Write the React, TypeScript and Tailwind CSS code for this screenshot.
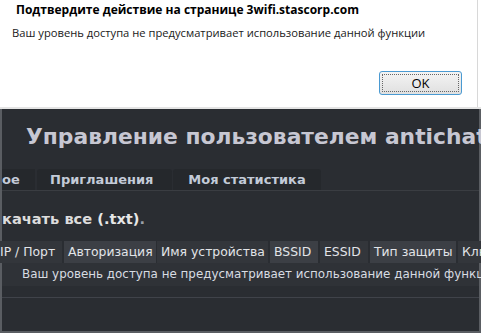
export default function App() {
  const headers = [
    { t: "IP / Порт", w: "w-[62px]", bg: "bg-[#33363b]", gap: "-ml-[2px] pl-0" },
    { t: "Авторизация", w: "w-[92px]", bg: "bg-[#3c3f45]", gap: "ml-[2px] pl-[4px]" },
    { t: "Имя устройства", w: "w-[111px]", bg: "bg-[#33363b]", gap: "ml-[1px] pl-[4px]" },
    { t: "BSSID", w: "w-[48px]", bg: "bg-[#3c3f45]", gap: "ml-[2px] pl-[4px]" },
    { t: "ESSID", w: "w-[48px]", bg: "bg-[#33363b]", gap: "ml-[2px] pl-[4px]" },
    { t: "Тип защиты", w: "w-[86px]", bg: "bg-[#3c3f45]", gap: "ml-[2px] pl-[4px]" },
    { t: "Ключ", w: "w-[60px]", bg: "bg-[#33363b]", gap: "ml-[2px] pl-[4px]" },
  ];

  return (
    <div className="w-[481px] h-[333px] overflow-hidden flex flex-col bg-[#2a2d32]">
      {/* диалог подтверждения */}
      <div className="h-[109px] shrink-0 bg-white border-b-2 border-[#e4e4e4] flex">
        <div className="flex-1 flex flex-col border-r border-[#d8d8d8] font-['Open_Sans',sans-serif]">
          <div className="pl-[16px] pt-[1px] text-[12px] font-bold text-black leading-[18px] whitespace-nowrap">
            Подтвердите действие на странице 3wifi.stascorp.com
          </div>
          <div className="pl-[12px] pt-[6px] text-[11.2px] text-[#1a1a1a] leading-[16px] whitespace-nowrap">
            Ваш уровень доступа не предусматривает использование данной функции
          </div>
          <div className="flex justify-end pr-[15px] pt-[30px]">
            <button className="w-[83px] h-[24px] rounded-[3px] border border-[#4a9ad2] bg-gradient-to-b from-[#f4f4f4] to-[#e0e0e0] p-[2px]">
              <div className="w-full h-full border border-dotted border-[#666] flex items-center justify-center text-[13px] text-black leading-none">
                OK
              </div>
            </button>
          </div>
        </div>
        <div className="w-[3px] bg-white" />
      </div>

      {/* страница */}
      <div className="flex-1 flex flex-col border-l-2 border-r-2 border-b-2 border-[#5a5d62] font-['DejaVu_Sans',sans-serif]">
        <div className="pl-[24px] pt-[14px] h-[60px] text-[21.8px] font-bold text-[#c7c7d2] whitespace-nowrap leading-[28px]">
          Управление пользователем antichat
        </div>
        <div className="flex h-[22px] border-b border-[#3a3d42] text-[13px] font-bold text-[#c3cbd8] whitespace-nowrap">
          <div className="w-[33px] bg-[#25282c] flex items-center">ое</div>
          <div className="w-[2px]" />
          <div className="w-[135px] bg-[#25282c] flex items-center pl-[13px] rounded-t-[3px]">Приглашения</div>
          <div className="w-[1px]" />
          <div className="w-[148px] bg-[#25282c] flex items-center justify-center rounded-t-[3px]">Моя статистика</div>
        </div>
        <div className="h-[50px] pt-[18px] text-[14.6px] font-bold text-[#dcdcdc] whitespace-nowrap leading-[20px]">
          качать все <span className="text-[#e6e6e6]">(.txt)</span><span className="text-[#9aa0a8]">.</span>
        </div>
        <div className="flex h-[22px] whitespace-nowrap text-[12.4px] text-[#e2e4e8]">
          {headers.map((h, i) => (
            <div key={i} className={`${h.w} ${h.bg} ${h.gap} shrink-0 flex items-center`}>
              {h.t}
            </div>
          ))}
        </div>
        <div className="h-[23px] bg-[#2f3237] flex items-center pl-[20px] text-[11.9px] text-[#d8dce2] whitespace-nowrap">
          Ваш уровень доступа не предусматривает использование данной функции
        </div>
        <div className="h-[11px]" />
        <div className="h-[1px] bg-[#40434a]" />
      </div>
    </div>
  );
}
